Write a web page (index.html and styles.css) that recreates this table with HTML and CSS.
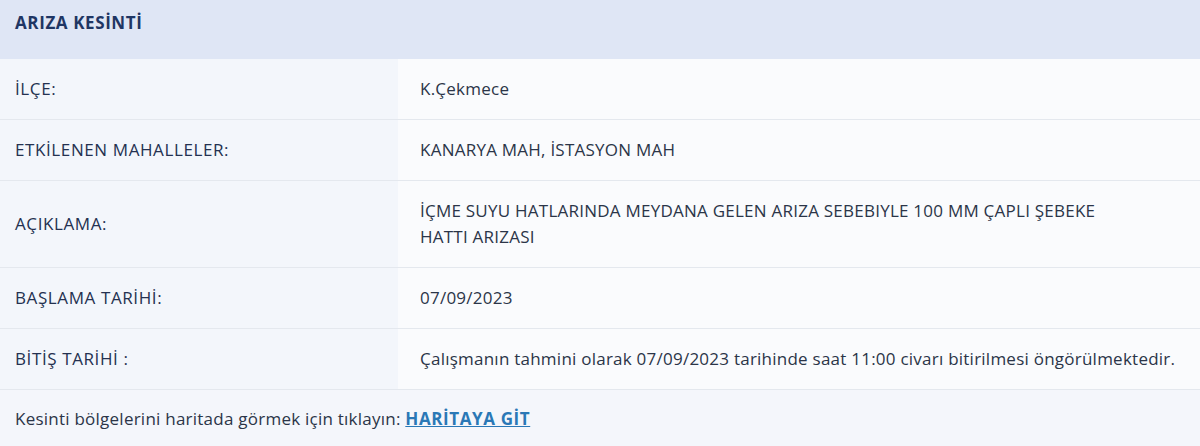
FILE: index.html
```html
<!DOCTYPE html>
<html lang="tr">
<head>
<meta charset="utf-8">
<title>Arıza Kesinti</title>
<link rel="stylesheet" href="styles.css">
</head>
<body>
<div class="panel">
  <div class="panel-head">ARIZA KESİNTİ</div>
  <div class="info">
    <div class="row">
      <div class="label">İLÇE:</div>
      <div class="value">K.Çekmece</div>
    </div>
    <div class="row">
      <div class="label">ETKİLENEN MAHALLELER:</div>
      <div class="value">KANARYA MAH, İSTASYON MAH</div>
    </div>
    <div class="row">
      <div class="label">AÇIKLAMA:</div>
      <div class="value">İÇME SUYU HATLARINDA MEYDANA GELEN ARIZA SEBEBIYLE 100 MM ÇAPLI ŞEBEKE<br>HATTI ARIZASI</div>
    </div>
    <div class="row">
      <div class="label">BAŞLAMA TARİHİ:</div>
      <div class="value">07/09/2023</div>
    </div>
    <div class="row">
      <div class="label">BİTİŞ TARİHİ :</div>
      <div class="value">Çalışmanın tahmini olarak 07/09/2023 tarihinde saat 11:00 civarı bitirilmesi öngörülmektedir.</div>
    </div>
  </div>
  <div class="panel-foot">Kesinti bölgelerini haritada görmek için tıklayın: <a class="map-link" href="#">HARİTAYA GİT</a></div>
</div>
</body>
</html>
```

FILE: styles.css
```css
html, body {
  margin: 0;
  padding: 0;
  background: #f4f6fb;
}
body {
  font-family: "Open Sans", Lato, sans-serif;
  font-size: 17px;
  letter-spacing: 0.24px;
  color: #2b3548;
}
.panel {
  width: 1200px;
}
.panel-head {
  height: 59px;
  box-sizing: border-box;
  padding: 10px 15px 0;
  line-height: 26px;
  background: #dfe6f5;
  color: #1f3664;
  font-weight: 700;
  font-size: 17px;
  letter-spacing: 0.6px;
}
.row {
  display: grid;
  grid-template-columns: 398px 1fr;
  border-bottom: 1px solid #e4e8ee;
}
.label, .value {
  padding: 17px 15px;
  line-height: 26px;
  display: flex;
  align-items: center;
}
.label {
  background: #f3f6fb;
  color: #243150;
  font-weight: 500;
  letter-spacing: 0.6px;
}
.value {
  display: block;
  align-self: stretch;
  background: #fafbfd;
  padding-left: 22px;
  padding-right: 8px;
}
.panel-foot {
  padding: 16px 15px;
  line-height: 26px;
  background: #f4f6fb;
}
.map-link {
  color: #2a78b6;
  font-weight: 700;
  letter-spacing: 0.6px;
  text-decoration: underline;
}
```
